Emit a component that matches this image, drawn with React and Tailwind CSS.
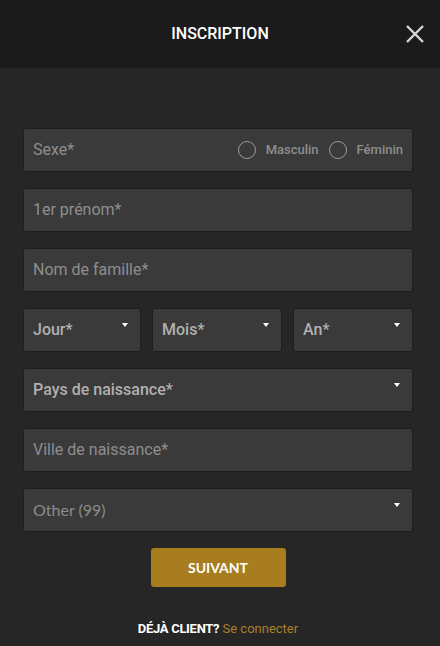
import React from 'react';

const field = 'h-[44px] rounded-[3px] border border-[#1e1e1e] bg-[#3a3a3a] flex items-center px-[9px]';

const Caret = () => (
  <span className="absolute right-[12px] top-[14px] w-0 h-0 border-l-[3px] border-r-[3px] border-t-[4px] border-l-transparent border-r-transparent border-t-white" />
);

const Select = ({ label, className = '', muted = false }) => (
  <div className={`${field} relative ${className}`}>
    <span
      className={
        muted
          ? "text-[16px] text-[#8c8c8c] font-['Lato',sans-serif]"
          : 'text-[16px] text-[#b0b0b0] font-medium'
      }
    >
      {label}
    </span>
    <Caret />
  </div>
);

const Input = ({ label }) => (
  <div className={field}>
    <span className="text-[16px] text-[#8e8e8e]">{label}</span>
  </div>
);

const Radio = ({ label }) => (
  <label className="flex items-center gap-[10px]">
    <span className="w-[18px] h-[18px] rounded-full border border-[#9a9a9a]" />
    <span className="text-[13px] text-[#8e8e8e] font-medium">{label}</span>
  </label>
);

export default function App() {
  return (
    <div className="w-[440px] h-[646px] bg-[#262626] font-['Roboto',sans-serif] flex flex-col">
      <div className="h-[68px] bg-[#1b1b1b] relative flex items-center justify-center shrink-0">
        <h1 className="text-[16px] font-medium text-white">INSCRIPTION</h1>
        <button className="absolute right-[15px] top-[24px]">
          <svg width="20" height="20" viewBox="0 0 20 20">
            <path d="M2 2 L18 18 M18 2 L2 18" stroke="#d6d6d6" strokeWidth="2.4" />
          </svg>
        </button>
      </div>

      <div className="pl-[23px] pt-[60px] flex flex-col gap-[16px] w-[413px]">
        <div className={`${field} justify-between`}>
          <span className="text-[16px] text-[#8e8e8e]">Sexe*</span>
          <div className="flex items-center gap-[10px]">
            <Radio label="Masculin" />
            <Radio label="Féminin" />
          </div>
        </div>
        <Input label="1er prénom*" />
        <Input label="Nom de famille*" />
        <div className="flex gap-[11px]">
          <Select label="Jour*" className="w-[118px]" />
          <Select label="Mois*" className="w-[130px]" />
          <Select label="An*" className="flex-1" />
        </div>
        <Select label="Pays de naissance*" />
        <Input label="Ville de naissance*" />
        <Select label="Other (99)" muted />

        <div className="flex justify-center">
          <button className="w-[135px] h-[39px] rounded-[3px] bg-[#a87d1f] text-white text-[14px] font-bold font-['Lato',sans-serif]">
            SUIVANT
          </button>
        </div>

        <p className="text-center text-[13px] mt-[16px]">
          <span className="text-white font-bold tracking-[-0.3px]">DÉJÀ CLIENT?</span>{' '}
          <span className="text-[#a8802a]">Se connecter</span>
        </p>
      </div>
    </div>
  );
}
